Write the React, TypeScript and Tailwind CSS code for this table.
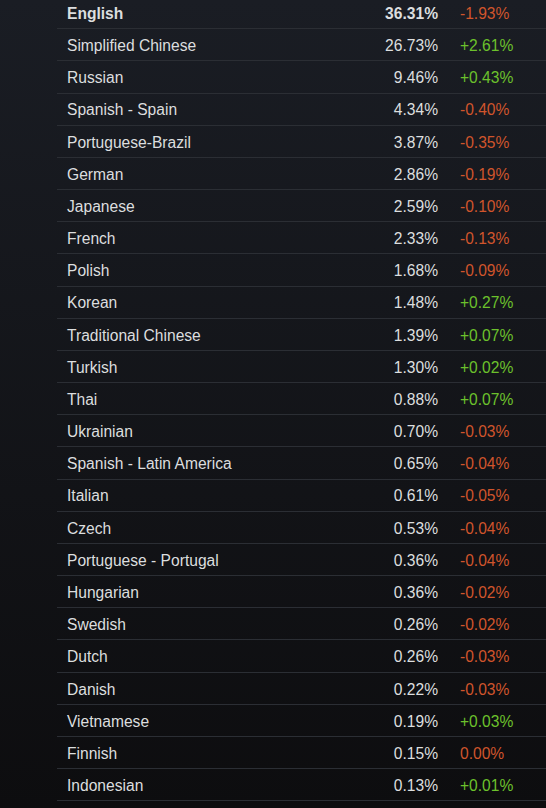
import React from "react";

const rows: [string, string, string][] = [
  ["English", "36.31%", "-1.93%"],
  ["Simplified Chinese", "26.73%", "+2.61%"],
  ["Russian", "9.46%", "+0.43%"],
  ["Spanish - Spain", "4.34%", "-0.40%"],
  ["Portuguese-Brazil", "3.87%", "-0.35%"],
  ["German", "2.86%", "-0.19%"],
  ["Japanese", "2.59%", "-0.10%"],
  ["French", "2.33%", "-0.13%"],
  ["Polish", "1.68%", "-0.09%"],
  ["Korean", "1.48%", "+0.27%"],
  ["Traditional Chinese", "1.39%", "+0.07%"],
  ["Turkish", "1.30%", "+0.02%"],
  ["Thai", "0.88%", "+0.07%"],
  ["Ukrainian", "0.70%", "-0.03%"],
  ["Spanish - Latin America", "0.65%", "-0.04%"],
  ["Italian", "0.61%", "-0.05%"],
  ["Czech", "0.53%", "-0.04%"],
  ["Portuguese - Portugal", "0.36%", "-0.04%"],
  ["Hungarian", "0.36%", "-0.02%"],
  ["Swedish", "0.26%", "-0.02%"],
  ["Dutch", "0.26%", "-0.03%"],
  ["Danish", "0.22%", "-0.03%"],
  ["Vietnamese", "0.19%", "+0.03%"],
  ["Finnish", "0.15%", "0.00%"],
  ["Indonesian", "0.13%", "+0.01%"],
];

export default function App() {
  return (
    <div
      className="w-[546px] h-[808px] overflow-hidden bg-gradient-to-b from-[#1a1d24] to-[#0d0d0f] text-[15.6px] text-[#dcdedf]"
      style={{ fontFamily: '"Liberation Sans", Arial, sans-serif' }}
    >
      <div className="ml-[57px] mt-[-3px]">
        {rows.map(([name, pct, chg], i) => {
          const pos = chg.startsWith("+");
          return (
            <div
              key={name}
              className={`flex items-center h-[32.18px] pt-[2px] border-b border-[#2b2e34] ${i === 0 ? "font-bold" : ""}`}
            >
              <div className="flex-1 pl-[10px]">{name}</div>
              <div className="w-[100px] text-right">{pct}</div>
              <div className={`w-[108px] pl-[22px] font-normal ${pos ? "text-[#6cc12c]" : "text-[#d0552c]"}`}>{chg}</div>
            </div>
          );
        })}
      </div>
    </div>
  );
}
